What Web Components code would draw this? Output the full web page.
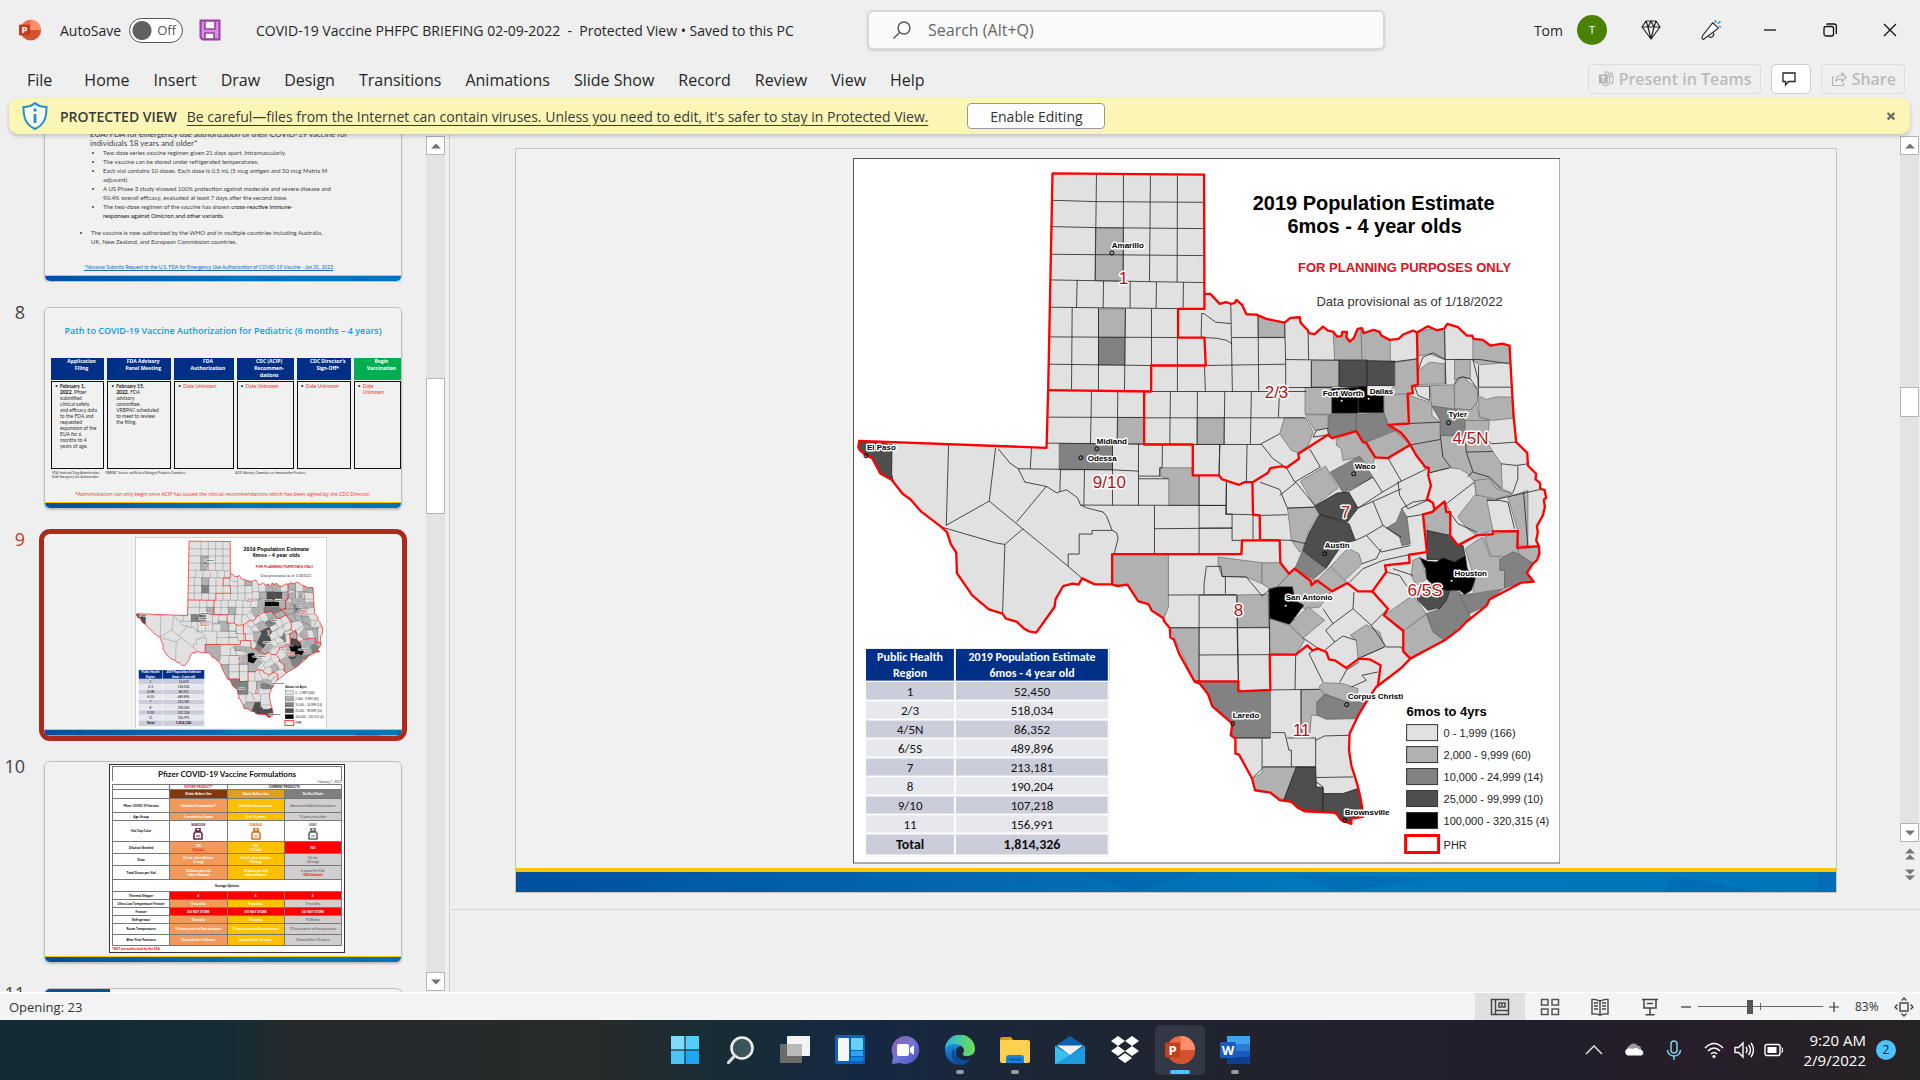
<!DOCTYPE html>
<html lang="en">
<head>
<meta charset="utf-8">
<title>COVID-19 Vaccine PHFPC BRIEFING 02-09-2022</title>
<style>
  html, body { height: 100%; }
  body { margin: 0; overflow: hidden; background: #efefef; color: #262626; font-family: "Open Sans", "Noto Sans", sans-serif; font-size: 14px; }
</style>
</head>
<body>
<ppt-window></ppt-window>

<script>
// small helper: attach an open root and fill it
function render(el, css, html) {
  el.attachShadow({ mode: 'open' });
  el.shadowRoot.innerHTML = `<style>*{box-sizing:border-box}${css}</style>${html}`;
}

/* ---------- icons ---------- */
const ICONS = {
  ppt: ['0 0 32 32', `<circle cx="17" cy="16" r="15" fill="#ed6c47"/><path d="M17 1a15 15 0 0 1 15 15H17z" fill="#ff8f6b"/><path d="M2 16h30a15 15 0 0 1-30 0z" fill="#d35230"/><rect x="0" y="8" width="16" height="16" rx="1.5" fill="#c43e1c"/><text x="8" y="21" font-family="Open Sans" font-weight="700" font-size="14" fill="#fff" text-anchor="middle">P</text>`],
  save: ['0 0 22 22', `<path d="M1.5 1.5h19v19h-17l-2-2z" fill="#d48fdc" stroke="#9b3fa6" stroke-width="2"/><path d="M6 2h10v8H6zM6 20v-6h9v6z" fill="#fff" stroke="#9b3fa6" stroke-width="1.6"/>`],
  search: ['0 0 20 20', `<circle cx="12" cy="8" r="6" fill="none" stroke="#555" stroke-width="1.4"/><path d="M7.8 12.2L1.5 18.5" stroke="#555" stroke-width="1.4"/>`],
  diamond: ['0 0 20 20', `<path d="M5 1h10l4 6-9 12L1 7zM1 7h18M7 7l3 12 3-12M5 1l2 6 3-6 3 6 2-6" fill="none" stroke="#222" stroke-width="1.2" stroke-linejoin="round"/>`],
  pen: ['0 0 22 22', `<path d="M13 3l6 6L5 19.5 2.500 21.500 1 20l1-3z" fill="#fff" stroke="#333" stroke-width="1.3" stroke-linejoin="round"/><path d="M8 18a3 3 0 1 0 5-4.500" fill="none" stroke="#333" stroke-width="1.300"/><path d="M15.500 0l.800 3M21.500 1.500l-3 2.500M22 8l-2.500-1" stroke="#2a8dd4" stroke-width="1.600"/>`],
  min: ['0 0 14 14', `<path d="M1 7h12" stroke="#111" stroke-width="1.3"/>`],
  restore: ['0 0 14 14', `<rect x="1" y="3.500" width="9.500" height="9.500" rx="2" fill="none" stroke="#111" stroke-width="1.300"/><path d="M3.500 1H11a2.300 2.300 0 0 1 2.300 2.300V11" fill="none" stroke="#111" stroke-width="1.300"/>`],
  close: ['0 0 14 14', `<path d="M1 1l12 12M13 1L1 13" stroke="#111" stroke-width="1.300"/>`],
  xbold: ['0 0 14 14', `<path d="M3 3.500l8 7.500M11 3.500L3 11" stroke="#666" stroke-width="2.600"/>`],
  teams: ['0 0 18 18', `<rect x="1" y="4" width="10" height="10" fill="#b4b4b4"/><path d="M3.500 6.500h5M6 6.500V12" stroke="#efefef" stroke-width="1.500"/><circle cx="10" cy="3" r="2" fill="none" stroke="#b4b4b4" stroke-width="1.200"/><circle cx="15" cy="3.500" r="1.500" fill="none" stroke="#b4b4b4" stroke-width="1.200"/><path d="M11 6.500h6v4.500a3 3 0 0 1-3 3M13 6.500v6a4.500 4.500 0 0 1-8 2" fill="none" stroke="#b4b4b4" stroke-width="1.200"/>`],
  comment: ['0 0 16 16', `<path d="M2 2h12v8.500H7.500L4.500 14v-3.500H2z" fill="none" stroke="#222" stroke-width="1.300"/>`],
  share: ['0 0 16 16', `<path d="M3 6H1.500v8.500h11V12M5 10c0-4 2.500-5.500 6-5.500V2l4 4.500-4 4V8C8 8 6.500 8.500 5 10z" fill="none" stroke="#b4b4b4" stroke-width="1.200" stroke-linejoin="round"/>`],
  shield: ['0 0 26 28', `<path d="M13 1c3 3 7 4 11.500 4 0 11-2 17.500-11.500 22C3.500 22.500 1.500 16 1.500 5 6 5 10 4 13 1z" fill="#fdfdf0" stroke="#2490cf" stroke-width="2"/><path d="M13 12v9" stroke="#2490cf" stroke-width="2.800"/><circle cx="13" cy="8" r="1.700" fill="#2490cf"/>`],
  up: ['0 0 10 6', `<path d="M0 5.500L5 .500l5 5z" fill="#777"/>`],
  down: ['0 0 10 6', `<path d="M0 .500h10l-5 5z" fill="#777"/>`],
  prev: ['0 0 10 12', `<path d="M0 5.500L5 .500l5 5zM0 11.500l5-5 5 5z" fill="#777"/>`],
  next: ['0 0 10 12', `<path d="M0 .500h10l-5 5zM0 6.500h10l-5 5z" fill="#777"/>`],
  normal: ['0 0 20 18', `<path d="M1.500 1.500h17v15h-17zM5.500 1.500v15M5.500 12.500h13M9 5h6v4H9zM11 7h2" fill="none" stroke="#444" stroke-width="1.500"/>`],
  sorter: ['0 0 20 18', `<path d="M1.500 1.500h6.500v5.500H1.500zM12 1.500h6.500v5.500H12zM1.500 11h6.500v5.500H1.500zM12 11h6.500v5.500H12z" fill="none" stroke="#555" stroke-width="1.500"/>`],
  reading: ['0 0 20 18', `<path d="M10 3Q6 1 2 1.500V16q4-.500 8 1 4-1.500 8-1V1.500Q14 1 10 3v14M4 5h4M4 8h4M4 11h4M12 5h4M12 8h4M12 11h4" fill="none" stroke="#444" stroke-width="1.400"/>`],
  show: ['0 0 20 18', `<path d="M2 1.500h16M4 1.500v8.500h12V1.500M7 5.500h6M10 10v6.500M5.500 16.800h9" fill="none" stroke="#444" stroke-width="1.500"/>`],
  minus: ['0 0 12 12', `<path d="M1 6h10" stroke="#333" stroke-width="1.200"/>`],
  plus: ['0 0 12 12', `<path d="M1 6h10M6 1v10" stroke="#333" stroke-width="1.200"/>`],
  fit: ['0 0 20 20', `<path d="M6 6h8v8H6zM7.500 3.500L10 1l2.500 2.500M7.500 16.500L10 19l2.500-2.500M3.500 7.500L1 10l2.500 2.500M16.500 7.500L19 10l-2.500 2.500" fill="none" stroke="#444" stroke-width="1.400"/>`],
  start: ['0 0 30 30', `<path d="M1 1h13.400v13.400H1z" fill="#7fdcff"/><path d="M15.600 1H29v13.400H15.600z" fill="#55ccfb"/><path d="M1 15.600h13.400V29H1z" fill="#4cc4f8"/><path d="M15.600 15.600H29V29H15.600z" fill="#1fa5f5"/>`],
  find: ['0 0 30 30', `<circle cx="17" cy="13" r="10.500" fill="#3e545c" stroke="#eee" stroke-width="2.600"/><path d="M9.500 21L3.500 27.500" stroke="#ddd" stroke-width="3.200" stroke-linecap="round"/>`],
  tasks: ['0 0 30 30', `<rect x="0" y="9" width="22" height="19" rx="1" fill="#6b6b6b"/><rect x="7" y="1" width="23" height="20" rx="1" fill="#f3f3f3"/><path d="M7 9h15v12H7z" fill="#b9b9b9"/>`],
  widgets: ['0 0 30 30', `<rect width="30" height="29" rx="2" fill="#0a63b8"/><rect x="3" y="3" width="11" height="23" rx="1" fill="#f5f5f5"/><rect x="16" y="3" width="12" height="12" rx="1" fill="#63d2fb"/><rect x="16" y="16" width="12" height="5" fill="#2ba3f0"/><rect x="16" y="22" width="12" height="4" fill="#0d86e8"/>`],
  chat: ['0 0 30 30', `<defs><linearGradient id="c" x2="1" y2="1"><stop stop-color="#8d5aa8"/><stop offset=".5" stop-color="#7276d8"/><stop offset="1" stop-color="#4a47b8"/></linearGradient></defs><path d="M15 1a14 14 0 1 1-5 27l-8 1 1-8A14 14 0 0 1 15 1z" fill="url(#c)"/><rect x="7" y="9" width="12" height="12" rx="2" fill="#fff"/><path d="M20 13l4-3v10l-4-3z" fill="#fff"/>`],
  edge: ['0 0 30 30', `<defs><linearGradient id="e" x2="1"><stop stop-color="#2cb4e8"/><stop offset="1" stop-color="#6be04f"/></linearGradient><linearGradient id="f" y2="1" x2="0"><stop stop-color="#1b8fdc"/><stop offset="1" stop-color="#0c4f9f"/></linearGradient></defs><path d="M0 15A15 15 0 0 1 30 14c0 5-4 7-8 7-3 0-5-1-4-3 3-4-1-8-6-8S2 12 0 15z" fill="url(#e)"/><path d="M0 15c1-4 5-6 10-6 3 0 5 1 6 2-4 0-6 4-5 8 1 5 7 8 14 5-3 4-6 6-10 6A15 15 0 0 1 0 15z" fill="url(#f)"/><path d="M9 13c-5 5-2 14 6 17 4 0 8-3 10-6-8 3-16-1-16-11z" fill="#0a4a94"/>`],
  folder: ['0 0 30 30', `<path d="M0 4q0-2 2-2h9l3 4H0z" fill="#dd9b0c"/><path d="M0 6q0-1 1-1h27q2 0 2 2v19q0 2-2 2H2q-2 0-2-2z" fill="#ffd04f"/><path d="M6 28v-5q0-3 3-3h12q3 0 3 3v5z" fill="#1683d6"/><path d="M9 24.500h12" stroke="#0b58a4" stroke-width="2"/>`],
  mail: ['0 0 30 30', `<path d="M0 11L15 1l15 10v18H0z" fill="#0f5fb0"/><path d="M0 11l30 18H0z" fill="#38c0f0"/><path d="M30 11v18H0z" fill="#1b9de0"/><path d="M2 10.500h26L15 20z" fill="#f1f1f1"/>`],
  dropbox: ['0 0 30 30', `<path d="M8 1l7 5-7 5-7-5zM22 1l7 5-7 5-7-5zM8 11l7 5-7 5-7-5zM22 11l7 5-7 5-7-5zM15 18l7 5-7 5-7-5z" fill="#fff"/>`],
  word: ['0 0 30 30', `<rect x="7" y="1" width="23" height="28" rx="2" fill="#2b7cd3"/><path d="M7 1h23v8H7z" fill="#41a5ee"/><path d="M7 16h23v7H7z" fill="#185abd"/><path d="M7 22h23v5q0 2-2 2H9q-2 0-2-2z" fill="#103f91"/><rect y="7" width="16" height="16" rx="1.500" fill="#185abd"/><text x="8" y="20" font-family="Open Sans" font-weight="700" font-size="13" fill="#fff" text-anchor="middle">W</text>`],
  chevron: ['0 0 20 20', `<path d="M2 14l8-8 8 8" fill="none" stroke="#eee" stroke-width="1.400"/>`],
  cloud: ['0 0 22 20', `<path d="M4 12a5 5 0 0 1 2-7 6 6 0 0 1 9 0 5 5 0 0 1 4 5z" fill="#9a9a9a"/><path d="M4 16a4 4 0 0 1-1-7q3-2 6 0 6-3 8 1a3 3 0 0 1 2 6z" fill="#fff"/>`],
  mic: ['0 0 20 20', `<rect x="7" y="1" width="6" height="12" rx="3" fill="none" stroke="#7fd0e6" stroke-width="1.500"/><path d="M3.500 10a6.500 6 0 0 0 13 0M10 16v4" fill="none" stroke="#7fd0e6" stroke-width="1.500"/>`],
  wifi: ['0 0 20 18', `<path d="M1 7q9-9 18 0M4 10q6-6 12 0M7 13q3-3 6 0" fill="none" stroke="#fff" stroke-width="1.600"/><circle cx="10" cy="15.500" r="1.600" fill="#fff"/>`],
  volume: ['0 0 20 18', `<path d="M1 6.500h3.500L9 2v14l-4.500-4.500H1z" fill="none" stroke="#fff" stroke-width="1.400"/><path d="M12 6q2 3 0 6M14.500 4q4 5 0 10M17 2q5 7 0 14" fill="none" stroke="#fff" stroke-width="1.400"/>`],
  battery: ['0 0 20 18', `<rect x="1" y="3.500" width="15" height="11" rx="2" fill="none" stroke="#fff" stroke-width="1.400"/><path d="M3.500 6h9v6h-9z" fill="#fff"/><path d="M17 7h1.500v4H17" stroke="#fff" fill="none"/>`],
};

class OfficeIcon extends HTMLElement {
  connectedCallback() {
    const [box, body] = ICONS[this.getAttribute('name')];
    render(this, `:host{display:inline-flex;flex:none;width:20px;height:20px} svg{width:100%;height:100%;display:block}`,
      `<svg viewBox="${box}" aria-hidden="true">${body}</svg>`);
  }
}
customElements.define('office-icon', OfficeIcon);

/* ---------- Texas map ---------- */
// The map is digitised on four sheets, three units to the pixel.
const SHEETS = { nw: [0, 0], ne: [1050, 0], sw: [0, 840], se: [1050, 840] };

function place(sheet, pts) {
  const [dx, dy] = SHEETS[sheet];
  return pts.trim().split(/\s+/).map(p => {
    const [x, y] = p.split(',').map(Number);
    return (x + dx) + ',' + (y + dy);
  }).join(' ');
}
function join(rows) {
  return rows.trim().split('\n').map(r => {
    r = r.trim();
    return place(r.slice(0, 2), r.slice(3));
  }).join(' ');
}

const OUTLINE = join(`
nw 608,73 1063,77 1064,435
ne 32,435 60,465 78,460 95,465 105,462 110,453 127,468 140,496 170,497 200,510 255,521 272,507 300,505 303,522 325,545 328,553 345,556 370,533 385,545 400,548 412,563 425,562 428,549 442,549 440,565 450,578 462,568 474,540 487,538 492,553 522,543 540,549 545,560 570,573 597,570 612,556 640,545 652,551 685,532 712,544 733,540 743,525 775,535 802,560 818,560 822,570 850,573 872,590 908,584 930,590 936,700 942,800 950,880 983,912 985,945
se 985,110 1010,135 1008,152 1022,163 1022,180 1035,183 1040,208 1033,212 1036,235 1030,260 1012,292 1015,310 1010,335 1018,352 1020,375 1012,395 1000,405 982,433 1003,459 965,462 870,512 862,530 800,580 778,603 735,635 632,690 605,718 530,775 500,820 475,862 450,915 448,965 455,1010 475,1075 483,1110 488,1138 490,1165 455,1170 455,1186 425,1175 410,1155 400,1152 315,1148 295,1138 275,1120 240,1115 212,1092 166,1085 157,1050 118,978 107,975 107,930 93,920 98,885 38,833 25,797 0,765
sw 1035,760 988,675 972,632 962,627 960,598 943,578 940,568 905,545 897,527 865,517 833,468 803,472 787,467 735,467 697,449 686,468 668,465 640,472 617,512 614,535 559,612 537,608 523,600 500,579 468,570 458,555 417,542 367,500 321,433 319,372 303,347 291,310 275,295 212,247 182,212 158,195 125,153 91,134 66,87 48,80 30,65 25,55 28,36 590,57
nw 595,720`);

// Public Health Region borders
const BORDERS = [
  join(`nw 1064,435 1064,480 985,480 985,566 1064,566 1068,650 904,650 904,728 595,724`),
  join(`nw 883,728 883,887 1029,887 1029,980 1108,980 1118,992 1168,1008
ne 135,1000 160,1000 205,972 212,958 248,952 260,957 298,930 296,915 385,858 397,868 470,847 490,880 500,882 527,926 565,928 632,888 620,870 602,850 566,828 628,824 624,735 640,733 637,712 655,707 652,551`),
  join(`ne 632,888 650,920 672,948 676,955 688,957 686,980 694,1010 682,1052
se 700,222 705,243 735,218 740,250 752,250 752,320 775,350 832,320 880,316 880,308 955,307 953,357 1018,352`),
  join(`se 705,243 698,250 670,257 682,370 628,378 630,402 556,410 560,430 518,488 565,540 553,560 611,607 611,668 632,690`),
  join(`se 158,160 160,258 180,260 181,332`),
  join(`sw 787,467 787,376 1175,376 1177,335
se 240,335 242,402 268,435 285,420 333,457 335,470 352,455 397,488 443,463 475,488 518,488`),
  join(`se -15,758 116,758 116,788 212,784 210,678 288,678 323,650 338,665 355,660 380,670 388,692 405,695 440,718 478,690 510,692 543,710 535,770`),
];

// shaded counties: sheet, class, corners
const SHADED = `
nw b 737,237 821,238 820,397 736,395
nw b 746,480 827,480 825,566 746,566
nw c 746,566 825,566 825,648 746,648
nw b 804,806 883,806 883,887 802,885
nw c 628,885 788,885 788,963 628,963
nw b 1042,807 1123,807 1123,887 1042,887
nw b 930,957 1027,957 1029,980 1048,982 1048,1070 957,1070 957,990 930,982
sw d 28,36 126,47 125,136 130,158 91,134 66,87 30,65
sw b 787,376 956,378 956,535 943,568 905,545 865,517 833,468 787,467
sw b 960,598 1048,598 1048,757 1035,757
ne b 175,500 255,521 255,565 175,565
ne b 400,545 484,530 487,633 405,633
ne b 484,530 545,545 572,573 572,640 487,633
ne b 335,636 418,634 418,713 335,713
ne d 418,634 502,634 502,713 418,713
ne d 502,636 586,637 586,710 502,710
ne b 586,642 652,630 655,707 637,712 640,733 586,740 553,740 586,710
ne b 316,716 397,716 397,796 316,796
ne e 397,720 475,715 475,793 397,793
ne e 476,713 502,713 502,740 553,740 553,791 476,791
ne b 553,738 624,735 628,824 566,828 553,793
ne b 318,798 385,798 385,840 345,845
ne c 387,798 470,796 468,847 397,868 387,855
ne c 470,796 553,793 566,828 602,842 500,880 490,880 468,847
ne b 500,880 602,840 632,888 565,928 527,926
ne b 254,807 318,807 340,850 326,890 296,912 275,905 240,855
ne a 340,865 350,845 383,838 387,858
ne b 410,870 468,850 525,925 518,960 480,925 430,935 425,900 410,890
ne b 302,997 378,952 415,1018 345,1070
ne c 392,970 480,922 520,985 430,1032
ne b 628,740 697,762 697,800 722,820 722,860 795,862 797,815 870,815 862,880 880,908 905,945 908,1020 940,1034 890,1050 860,1055 830,1040 825,1000 805,975 780,960 750,957 690,972 688,957 672,948 632,888 566,828 628,824
ne b 652,551 735,530 735,632 690,615 655,622
ne b 820,560 930,585 932,640 840,648 820,635
ne b 655,665 690,640 737,645 740,705 655,707
ne b 765,632 812,632 812,690 790,684 765,695
ne b 690,710 763,708 765,780 697,772
ne b 765,705 790,684 833,720 835,760 815,783 765,780
ne b 765,780 815,783 830,762 840,805 870,815 795,815
ne b 835,740 860,752 890,744 938,745 940,808 880,815 840,805
ne a 645,712 690,712 690,755 655,740
ne c 697,772 780,785 795,815 795,860 722,860 722,815
se d 345,232 412,193 447,190 475,238 443,280 360,257
se d 360,257 448,285 467,335 445,340 415,365 378,420 308,365 330,310
se b 263,238 345,235 358,257 330,300 308,365 300,370 275,335 270,290
se c 308,368 378,420 335,457 285,420
se b 445,358 478,375 487,405 430,460 393,413
se b 352,455 393,413 443,463 397,488
se c 607,240 622,265 632,345 607,350 600,325 560,298 590,280
se b 55,385 187,402 187,465 140,445 67,443 55,410
se b 187,402 242,402 268,435 232,475 210,480 187,465
se b 232,475 285,420 352,458 395,488 360,535 315,540 285,520 278,475
se e 208,482 235,475 278,475 285,515 312,530 270,587 210,570
se b 110,499 205,497 208,595 112,597
se b 210,570 270,590 315,635 288,678 210,675
se b 270,587 325,535 375,575 310,628
se b 452,620 500,588 540,610 555,655 475,690 470,635
se b 670,257 705,243 738,220 752,250 752,318 720,318 682,305
se b 785,250 825,200 870,200 862,215 880,305 832,320 803,300 775,265
se b 925,205 985,185 985,352 957,350 955,307
se b 825,155 870,150 890,180 940,195 890,212 830,198
se b 553,560 640,500 680,555 615,605
se b 640,395 662,385 682,450 650,470 635,440
se b 611,607 680,557 700,600 735,635 632,690 611,668
se c 680,555 720,540 750,487 780,490 808,550 812,565 735,635 700,610
se c 780,498 820,495 915,478 870,512 862,530 808,555
se b 797,360 825,340 850,325 872,383 900,383 900,425 915,425 915,480 820,495 825,450
se b 855,325 880,315 955,307 953,357 960,378 940,370 925,383 875,383
se b 955,360 1020,355 1012,395 1000,405 958,375
se c 902,390 940,370 960,378 1000,405 982,433 1003,459 965,462 915,478 915,425 902,425
se d 682,305 750,320 775,350 790,350 797,385 760,400 710,392 682,392
se d 650,500 700,465 750,487 740,515 720,540 712,538 685,545 655,515
se e 662,388 685,398 710,400 730,388 765,400 797,382 803,420 827,450 815,485 795,497 780,485 740,485 700,472 682,450 678,420
se c 0,762 113,762 116,788 212,784 212,928 107,928 93,920 98,885 38,833 25,797
se b 304,784 360,782 375,800 352,820 352,860 335,860 330,925 304,925
se b 370,762 430,765 475,780 470,805 440,820 375,795 358,775
se c 352,820 375,797 440,820 500,820 470,870 380,872 352,860
se b 190,1015 290,1015 252,1115 212,1092 166,1085 157,1050 185,1035
se d 290,1015 348,1015 350,1075 370,1077 370,1148 315,1150 275,1125 252,1115
se d 370,1095 430,1095 475,1080 490,1138 490,1165 455,1186 400,1155 370,1148`;

// county lines that no shaded county already draws
const LINES = `
nw 740,77 736,395
nw 821,77 820,397
nw 902,77 899,397
nw 983,77 982,400
nw 608,154 740,158 1063,160
nw 605,233 740,236 1063,239
nw 603,316 1063,320
nw 601,393 1063,401
nw 600,475 1063,480
nw 598,564 985,566
nw 596,646 904,650
nw 682,395 680,476
nw 761,396 760,477
nw 841,397 841,478
nw 920,399 919,478
nw 1001,400 1000,478
nw 667,477 665,722
nw 746,478 746,724
nw 827,480 824,726
nw 905,480 905,650
nw 983,566 983,728
nw 1064,650 1067,728
nw 1143,460 1145,566 1148,728
nw 904,728 1370,728
nw 1063,650 1308,646
nw 1064,566 1100,568 1130,574 1147,585
nw 1054,566 1056,493 1064,495 1098,520 1143,524
nw 725,728 722,885
nw 804,728 802,885
nw 595,805 883,806
nw 590,883 1029,887
nw 962,728 960,887
nw 1043,728 1042,887
nw 1125,728 1123,887
nw 883,807 1366,807
nw 1029,887 1234,887
nw 545,898 541,960
nw 788,885 788,1070
nw 866,885 866,1070
nw 704,963 702,1070
nw 632,963 630,1028
nw 505,960 788,963 866,967
nw 938,887 937,957 930,957 930,982 866,982
nw 866,990 957,990
nw 1048,980 1048,1216
nw 692,1069 1128,1070
nw 1110,887 1108,980
nw 1130,998 1128,1096 1147,1096 1147,1175 1175,1175
nw 914,1070 914,1216
sw 914,300 1147,298
sw 1127,256 1210,258 1210,330
nw 445,900 480,943 505,960 525,1000 590,1013 620,1032 650,1023 683,1047 692,1069 710,1077 760,1090 770,1102 787,1145 800,1152 805,1168 793,1216
sw 437,57 418,217 655,413 697,449
sw 418,217 288,290
sw 296,46 289,290
sw 275,295 440,343 465,347 520,300
sw 465,347 458,555
sw 590,172 500,280
sw 787,305 727,305 727,316 688,316 688,376 655,376 655,413
sw 956,499 1160,498
sw 1048,499 1048,760
sw 960,597 1260,597
sw 1048,679 1260,678
sw 1162,499 1166,760
sw 1063,497 1063,465 1070,413 1113,413 1117,443 1127,445 1127,495
ne 175,500 177,728
ne 255,521 258,646 258,716
ne 325,545 327,632
ne 97,566 255,566
ne 258,632 418,634
ne 572,640 652,630
ne 155,728 152,885
ne 240,716 236,805
ne 335,636 335,716
ne 258,716 397,716
ne 60,887 58,980
ne 142,887 140,998
ne 184,885 240,855
ne 184,885 220,930 250,950
ne 330,900 362,955 285,1000 262,960
ne 180,1000 240,1022 263,1078
ne 240,1040 290,1000
ne 290,1002 345,1070
ne 520,985 548,1030 475,1078
ne 447,1028 520,985
ne 565,928 605,997 548,1030
ne 605,997 688,957
ne 595,997 600,1040 625,1080 690,1052
ne 735,545 737,632 737,705
ne 655,665 670,625 700,612 737,632
ne 737,632 840,632 930,645
ne 837,650 837,715 936,715
ne 820,632 835,690 837,740
ne 765,705 775,688 790,684 812,690 833,720
ne 608,825 722,820
ne 635,888 722,872
ne 722,860 730,925 755,957
ne 797,860 800,910 820,968 805,985
ne 800,910 880,908
ne 820,970 870,985 905,1020
ne 862,870 875,885 950,880
ne 905,945 950,950 985,945
ne 955,952 955,990 940,1032
ne 890,1052 1022,1022
ne 972,1030 985,1192
ne 690,972 750,957
ne 825,1000 740,1065
se 263,238 345,235
se 520,218 550,290 500,320 467,335
se 475,238 520,218 605,180
se 500,320 545,370 632,350
se 550,290 605,325
se 622,265 682,255
se 487,405 530,390 545,360
se 450,460 490,420 550,395 628,378
se 605,240 640,220 690,212
se 80,162 80,256
se 0,230 78,230
se 0,298 97,298
se 181,332 275,335
se 180,260 263,258
se 275,335 320,345
se 67,443 140,445 187,502 208,485
se 0,499 110,499
se 112,597 116,760
se 208,480 210,678
se 463,490 460,540 515,590 565,540
se 460,540 400,585 370,540
se 400,585 378,605 405,640 430,622 470,635
se 405,640 375,665
se 310,628 360,662
se 515,590 560,655 605,655 611,668
se 475,690 555,655
se 560,430 600,440 620,470 650,500
se 580,420 640,440
se 862,215 900,215 925,220 945,300
se 750,250 775,285 832,310
se 288,678 286,784
se 212,784 360,782
se 304,784 304,925
se 215,912 255,912 268,965 275,965 275,1015
se 187,930 187,1020 157,1050
se 107,928 212,928
se 262,928 348,928 348,1015
se 190,1015 348,1015
se 348,935 375,922 450,920
se 350,1047 460,1045
se 350,1060 370,1075 370,1095
se 328,675 370,760
se 328,675 350,660
se 420,762 440,725 478,700
se 535,730 487,740 500,755 455,775`;

const REGIONS = [[269, 135, '1'], [243, 339, '9/10'], [415, 249, '2/3'], [603, 295, '4/5N'], [491, 369, '7'], [384, 467, '8'], [558, 447, '6/5S'], [443, 587, '11']];
// label x, label y, name, dot x, dot y, white dot
const CITIES = [
  [262, 99, 'Amarillo', 262, 104], [247, 295, 'Midland', 247, 300], [238, 312, 'Odessa', 231, 309], [17, 301, 'El Paso', 16, 307],
  [599, 268, 'Tyler', 599, 274], [505, 320, 'Waco', 504, 325], [473, 247, 'Fort Worth', 492, 252, 1], [520, 245, 'Dallas', 519, 250, 1],
  [475, 399, 'Austin', 475, 405], [436, 451, 'San Antonio', 436, 457, 1], [605, 427, 'Houston', 602, 432, 1], [383, 569, 'Laredo', 383, 575],
  [498, 550, 'Corpus Christi', 497, 556], [495, 666, 'Brownsville', 495, 672],
];
const LEGEND = [['#e1e1e1', '0 - 1,999 (166)'], ['#b1b1b1', '2,000 - 9,999 (60)'], ['#828282', '10,000 - 24,999 (14)'], ['#4e4e4e', '25,000 - 99,999 (10)'], ['#000', '100,000 - 320,315 (4)']];
const POPULATION = [['1', '52,450'], ['2/3', '518,034'], ['4/5N', '86,352'], ['6/5S', '489,896'], ['7', '213,181'], ['8', '190,204'], ['9/10', '107,218'], ['11', '156,991']];

class TexasMap extends HTMLElement {
  connectedCallback() {
    const shaded = SHADED.trim().split('\n').map(r => `<polygon class="${r[3]}" points="${place(r.slice(0, 2), r.slice(5))}"/>`).join('');
    const lines = LINES.trim().split('\n').map(r => `<polyline points="${place(r.slice(0, 2), r.slice(3))}"/>`).join('');
    const borders = BORDERS.map(p => `<polyline points="${p}"/>`).join('');
    render(this, `
      :host { display: block; }
      svg { display: block; width: 100%; height: auto; background: #fff; font-family: "Liberation Sans", Arial, sans-serif; }
      .county { fill: none; stroke: #222; stroke-width: 2.4; }
      .a { fill: #e1e1e1; } .b { fill: #b1b1b1; stroke: #777; } .c { fill: #828282; stroke: #666; } .d { fill: #4e4e4e; stroke: #222; } .e { fill: #000; }
      .phr { fill: none; stroke: #f00; stroke-width: 7; stroke-linejoin: round; }
      .halo text { paint-order: stroke; stroke: #fff; stroke-width: 3px; stroke-linejoin: round; }
      .num { font-size: 17px; fill: #b01217; }
      .city { font-size: 8px; font-weight: 700; }
      table { width: 100%; border-collapse: separate; border-spacing: 0; font: 14px/17px Carlito, Lato, sans-serif; text-align: center; color: #111; table-layout: fixed; }
      td, th { padding: 0; border-bottom: 2px solid #fff; border-right: 2px solid #fff; }
      td { font-size: 13px; }
      th { background: #002f87; color: #fff; font-size: 12px; line-height: 16px; }
      tr:nth-child(odd) td { background: #cbcddb; } tr:nth-child(even) td { background: #e7e8ee; }
      tfoot td { font-weight: 700; font-size: 14px; line-height: 20px; }
    `, `
      <svg viewBox="3 9 708 706" role="img" aria-label="Texas counties by population aged 6 months to 4 years">
        <defs><clipPath id="tx"><polygon points="${OUTLINE}"/></clipPath></defs>
        <g transform="scale(.33333)">
          <polygon class="a" points="${OUTLINE}"/>
          <g class="county" clip-path="url(#tx)">${shaded}${lines}</g>
          <g class="phr">${borders}<polygon points="${OUTLINE}"/></g>
        </g>
        <g class="halo">
          <g class="num">${REGIONS.map(([x, y, t]) => `<text x="${x}" y="${y}">${t}</text>`).join('')}</g>
          ${CITIES.map(c => `<circle cx="${c[3]}" cy="${c[4]}" r="${c[5] ? 1 : 2}" fill="${c[5] ? '#fff' : 'none'}" stroke="${c[5] ? 'none' : '#000'}"/>`).join('')}
          <g class="city">${CITIES.map(([x, y, t]) => `<text x="${x}" y="${y}">${t}</text>`).join('')}</g>
        </g>
        <g text-anchor="middle">
          <text x="524" y="61" font-size="20" font-weight="700">2019 Population Estimate</text>
          <text x="525" y="84" font-size="20" font-weight="700">6mos - 4 year olds</text>
          <text x="555" y="123" font-size="13" font-weight="700" fill="#e0101b">FOR PLANNING PURPOSES ONLY</text>
          <text x="560" y="157" font-size="13" fill="#333">Data provisional as of 1/18/2022</text>
        </g>
        <text x="557" y="567" font-size="13" font-weight="700">6mos to 4yrs</text>
        ${LEGEND.map(([c, t], i) => `<rect x="557" y="${576 + i * 22}" width="31" height="16" fill="${c}" stroke="#333"/><text x="594" y="${588 + i * 22}" font-size="11" fill="#222">${t}</text>`).join('')}
        <rect x="556" y="687" width="33" height="17" fill="#fff" stroke="#f00" stroke-width="3"/>
        <text x="594" y="700" font-size="11" fill="#222">PHR</text>
        <foreignObject x="16" y="500" width="244" height="212">
          <table>
            <colgroup><col style="width:37%"><col></colgroup>
            <thead><tr><th>Public Health<br>Region</th><th>2019 Population Estimate<br>6mos - 4 year old</th></tr></thead>
            <tbody>${POPULATION.map(([r, n]) => `<tr><td>${r}</td><td>${n}</td></tr>`).join('')}</tbody>
            <tfoot><tr><td>Total</td><td>1,814,326</td></tr></tfoot>
          </table>
        </foreignObject>
        <rect x="3.500" y="9.500" width="707" height="705" fill="none" stroke="#555"/>
      </svg>`);
  }
}
customElements.define('texas-map', TexasMap);

// gold and blue band at the foot of every slide
class SlideBand extends HTMLElement {
  connectedCallback() {
    render(this, `
      :host { display: block; }
      svg { display: block; width: 100%; height: auto; }
    `, `<svg viewBox="0 0 1320 24" aria-hidden="true">
      <defs><linearGradient id="g"><stop stop-color="#00509e"/><stop offset=".35" stop-color="#0468b0"/><stop offset=".6" stop-color="#0078bb"/><stop offset="1" stop-color="#0075ba"/></linearGradient></defs>
      <path d="M0 0h1320v4H0z" fill="#fdc300"/><path d="M0 4h1320v20H0z" fill="url(#g)"/>
      <path d="M120 24l40-20 180 20zM560 4h120l-60 20zM820 24l-40-18 140 4z" fill="#005ea8" opacity=".35"/>
      <path d="M1148 24l8-17 84 17zM1302 4h18v20h-18z" fill="#006bb3" opacity=".8"/></svg>`);
  }
}
customElements.define('slide-band', SlideBand);

// proportional, so the same slide serves as page and thumbnail
class MapSlide extends HTMLElement {
  connectedCallback() {
    render(this, `
      :host { display: flex; flex-direction: column; background: #f1f1f1; aspect-ratio: 1320 / 744; overflow: hidden; }
      texas-map { width: 53.6%; margin: .7% 0 0 25.5%; }
      slide-band { margin-top: auto; }
    `, `<texas-map></texas-map><slide-band></slide-band>`);
  }
}
customElements.define('map-slide', MapSlide);

/* ---------- thumbnails ---------- */
class NovavaxSlide extends HTMLElement {
  connectedCallback() {
    render(this, `
      :host { display: flex; flex-direction: column; height: 200px; justify-content: flex-end; background: #f1f1f1; font: 6px/9px Lato, sans-serif; color: #444; white-space: nowrap; }
      .lead { font-size: 8px; margin: 0 0 0 45px; }
      ul { margin: 0; padding: 0 0 0 58px; }
      ul.outer { margin-top: 8px; padding-left: 46px; }
      b { font-weight: 400; color: #111; }
      a { display: block; margin: 18px 0 5px 39px; font-size: 5px; line-height: 6px; color: #1c62b7; }
    `, `
      <p class="lead">EUA/FDA for emergency use authorization of their COVID-19 vaccine for<br>individuals 18 years and older*</p>
      <ul><li>Two dose series vaccine regimen given 21 days apart. Intramuscularly.</li>
      <li>The vaccine can be stored under refrigerated temperatures.</li>
      <li>Each vial contains 10 doses. Each dose is 0.5 mL (5 mcg antigen and 50 mcg Matrix M<br>adjuvant).</li>
      <li>A US Phase 3 study showed 100% protection against moderate and severe disease and<br>90.4% overall efficacy, evaluated at least 7 days after the second dose.</li>
      <li>The two-dose regimen of the vaccine has shown <b>cross-reactive immune-<br>responses against Omicron and other variants.</b></li></ul>
      <ul class="outer"><li>The vaccine is now authorized by the WHO and in multiple countries including Australia,<br>UK, New Zealand, and European Commission countries.</li></ul>
      <a href="#">*Novavax Submits Request to the U.S. FDA for Emergency Use Authorization of COVID-19 Vaccine - Jan 31, 2022</a>
      <slide-band></slide-band>`);
  }
}
customElements.define('novavax-slide', NovavaxSlide);

class PathSlide extends HTMLElement {
  connectedCallback() {
    const steps = [
      ['Application<br>Filing', '<b>February 1,<br>2022</b>, Pfizer<br>submitted<br>clinical safety<br>and efficacy data<br>to the FDA and<br>requested<br>expansion of the<br>EUA for 6<br>months to 4<br>years of age.'],
      ['FDA Advisory<br>Panel Meeting', '<b>February 15,<br>2022</b>, FDA<br>advisory<br>committee,<br>VRBPAC scheduled<br>to meet to review<br>the filing.'],
      ['FDA<br>Authorization', '<i>Date Unknown</i>'],
      ['CDC (ACIP)<br>Recommen-<br>dations', '<i>Date Unknown</i>'],
      ['CDC Director’s<br>Sign-Off*', '<i>Date Unknown</i>'],
      ['Begin<br>Vaccination', '<i>Date<br>Unknown</i>'],
    ];
    render(this, `
      :host { display: flex; flex-direction: column; height: 200px; background: #f1f1f1; font-family: Lato, sans-serif; color: #333; }
      h3 { margin: 16px 0 20px; font: 600 9px/14px "Open Sans", sans-serif; text-align: center; color: #00a3e6; }
      .steps { display: grid; grid-template-columns: 53fr 64fr 59fr 57fr 54fr 47fr; column-gap: 3px; padding-left: 6px; }
      .step { min-width: 0; }
      .head { height: 22px; background: #002f87; color: #fff; font: 700 5px/7px "Open Sans", sans-serif; padding-left: 8px; text-align: center; white-space: nowrap; }
      .step:last-child .head { background: #00ad50; }
      .box { margin-top: 1px; height: 88px; border: 1px solid #111; font-size: 5px; line-height: 6px; padding: 1px 0 0 8px; white-space: nowrap; }
      .box::before { content: "•"; float: left; margin-left: -5px; }
      i { font-style: normal; color: #fa2a2a; }
      b { color: #111; }
      small { display: flex; gap: 6px; padding-left: 7px; font-size: 3px; line-height: 4px; height: 14px; margin-top: 2px; }
      small span:nth-child(2) { flex: 0 0 124px; }
      p { margin: 5px 0 0; text-align: center; color: #fa2a2a; font: 5px/8px "Open Sans", sans-serif; }
      slide-band { margin-top: auto; }
    `, `
      <h3>Path to COVID-19 Vaccine Authorization for Pediatric (6 months – 4 years)</h3>
      <div class="steps">${steps.map(([h, b]) => `<div class="step"><div class="head">${h}</div><div class="box">${b}</div></div>`).join('')}</div>
      <small><span>FDA: Food and Drug Administration<br>EUA: Emergency Use Authorization</span><span>VRBPAC: Vaccine and Related Biological Products Committee</span><span>ACIP: Advisory Committee on Immunization Practices</span></small>
      <p>*Administration can only begin once ACIP has issued the clinical recommendations which has been signed by the CDC Director.</p>
      <slide-band></slide-band>`);
  }
}
customElements.define('path-slide', PathSlide);

class PfizerSlide extends HTMLElement {
  connectedCallback() {
    const vial = (cap, name) => `<span style="color:${cap}">${name}</span><svg viewBox="0 0 10 12" width="10" height="12"><path d="M3 0h4v3H3zM2 4h6l1 2v5H1V6z" fill="#fff" stroke="${cap}" stroke-width="1.600"/><path d="M3 8h4" stroke="${cap}"/></svg>`;
    const rows = [
      [9, '', 'Dilute Before Use', 'Dilute Before Use', 'Do Not Dilute', 'top'],
      [14, 'Pfizer COVID-19 Vaccine', 'Pediatric Formulation*', 'Pediatric Formulation', 'Adolescent/Adult Formulation'],
      [8, 'Age Group', '6 months to 4 years', '5 to 11 years', '12 years and older'],
      [21, 'Vial Cap Color', vial('#6b2346', 'MAROON'), vial('#d8731a', 'ORANGE'), vial('#62666e', 'GRAY'), 'plain'],
      [12, 'Dilution Needed', 'YES<br><em>(2.2 mL)</em>', 'YES<br>(1.3 mL)', 'NO', 'no'],
      [12, 'Dose', '0.2 mL after dilution<br>(3 mcg)', '0.2 mL after dilution<br>(10 mcg)', '0.3 mL<br>(30 mcg)'],
      [14, 'Total Doses per Vial', '10 doses per vial<br>(after dilution)', '10 doses per vial<br>(after dilution)', '6 doses Per Vial<br><em>(NO dilution)</em>'],
      [12, null],
      [8, 'Thermal Shipper', 'X', 'X', 'X', 'stop'],
      [8, 'Ultra-Low Temperature Freezer', '9 months', '9 months', '9 months'],
      [8, 'Freezer', 'DO NOT STORE', 'DO NOT STORE', 'DO NOT STORE', 'stop'],
      [8, 'Refrigerator', '10 weeks', '10 weeks', '10 Weeks'],
      [11, 'Room Temperature', '12 hours prior to first puncture', '12 hours prior to first puncture', '12 hours prior to first puncture'],
      [11, 'After First Puncture', 'Discard after 12 hours', 'Discard after 12 hours', 'Discard after 12 hours'],
    ];
    render(this, `
      :host { display: flex; flex-direction: column; align-items: center; height: 200px; background: #f1f1f1; font: 3px/4px "Open Sans", sans-serif; color: #111; }
      .page { width: 236px; height: 189px; margin: 2px 0 0 8px; border: 1px solid #333; background: #fff; padding: 1px 2px; }
      h3 { margin: 0; font: 700 8px/14px Lato, sans-serif; text-align: center; border: 1px solid #777; border-width: 1px 1px 0; }
      time { display: block; text-align: right; line-height: 3px; padding-right: 1px; }
      table { width: 100%; border-collapse: collapse; table-layout: fixed; text-align: center; font-weight: 700; }
      td { padding: 0; border: 1px solid #777; }
      td:nth-child(2) { background: #f39a5b; color: #fff; } td:nth-child(3) { background: #ffc000; color: #fff; } td:nth-child(4) { background: #d0cece; color: #777; }
      .first td { background: #fff; color: #111; border-bottom: 0; } .first td:nth-child(2), em { color: #f00; font-style: normal; }
      .top td:nth-child(2) { background: #84380a; } .top td:nth-child(3) { background: #e09c23; } .top td:nth-child(4) { background: #7f7f7f; color: #fff; }
      .plain td { background: #fff; } .plain svg { display: block; margin: 1px auto 0; }
      .stop td + td, .no td:nth-child(4) { background: #f00; color: #fff; }
      p { margin: 1px 0; color: #f00; font-weight: 700; }
      slide-band { margin-top: auto; width: 100%; }
    `, `
      <div class="page"><h3>Pfizer COVID-19 Vaccine Formulations</h3><time>February 7, 2022</time>
      <table><tr class="first" style="height:4px"><td></td><td>FUTURE PRODUCT*</td><td colspan="2">CURRENT PRODUCTS</td></tr>
      ${rows.map(([h, ...c]) => c[0] === null ? `<tr style="height:${h}px"><td colspan="4">Storage Options</td></tr>` : `<tr class="${c[4] || ''}" style="height:${h}px">${c.slice(0, 4).map(t => `<td>${t}</td>`).join('')}</tr>`).join('')}
      </table><p>*NOT yet authorized by the FDA</p></div>
      <slide-band></slide-band>`);
  }
}
customElements.define('pfizer-slide', PfizerSlide);

class SlideThumb extends HTMLElement {
  connectedCallback() {
    render(this, `
      :host { display: flex; flex: none; align-items: flex-start; height: 202px; }
      .no { width: 25px; margin-right: 19px; text-align: right; font: 18px/24px "Open Sans", sans-serif; color: #444; margin-top: -7px; }
      .card { width: 358px; height: 202px; border: 1px solid #c0c0c0; border-radius: 6px; overflow: hidden; background: #f1f1f1; box-shadow: 0 1px 2px #0003; }
      :host([first]) { height: 148px; align-items: flex-end; overflow: hidden; }
      :host([current]) .no { color: #c43e1c; }
      :host([current]) .card { border: 0; outline: 5px solid #ab2a1b; }
    `, `<div class="no">${this.getAttribute('no') || ''}</div><div class="card"><slot></slot></div>`);
  }
}
customElements.define('slide-thumb', SlideThumb);

/* ---------- window parts ---------- */
class ScrollRail extends HTMLElement {
  connectedCallback() {
    const [a, b, c] = this.getAttribute('parts').split(' ');
    render(this, `
      :host { display: flex; flex-direction: column; width: 19px; flex: none; background: #e3e3e3; }
      button { height: 19px; flex: none; border: 1px solid #b5b5b5; background: #fff; padding: 0; display: grid; place-items: center; }
      office-icon { width: 10px; height: 6px; }
      .thumb { background: #fff; border: 1px solid #b5b5b5; flex: ${b} 1 0; }
    `, `<button aria-label="Scroll up"><office-icon name="up"></office-icon></button>
      <span style="flex:${a} 1 0"></span><span class="thumb"></span><span style="flex:${c} 1 0"></span>
      <button aria-label="Scroll down"><office-icon name="down"></office-icon></button>`);
  }
}
customElements.define('scroll-rail', ScrollRail);

class TitleBar extends HTMLElement {
  connectedCallback() {
    render(this, `
      :host { display: grid; grid-template-columns: 867fr 518fr 535fr; align-items: center; height: 60px; font-size: 14px; }
      .left, .right, label { display: flex; align-items: center; }
      .left { padding-left: 19px; white-space: nowrap; }
      .left > office-icon { width: 22px; height: 22px; }
      .auto { gap: 8px; margin: 0 15px 0 19px; }
      .auto input { appearance: none; margin: 0; width: 54px; height: 25px; border: 1px solid #555; border-radius: 13px; background: radial-gradient(circle at 12px 50%, #606060 9px, #fff 10px); }
      .off { margin: 0 0 0 -34px; padding-right: 8px; color: #555; font-size: 13px; }
      h1 { margin: 0 0 0 35px; font-size: 14px; font-weight: 400; white-space: pre; }
      .search { height: 40px; border: 2px solid #d8d8d8; border-radius: 6px; background: #fafafa; padding-left: 23px; gap: 14px; box-shadow: 0 1px 2px #0002; }
      .search input { border: 0; background: none; flex: 1; font: 16px "Open Sans", sans-serif; outline: 0; }
      .search input::placeholder { color: #666; }
      .right { justify-content: flex-end; padding-right: 23px; gap: 46px; }
      .right button { border: 0; padding: 0; background: none; display: flex; }
      .who { display: flex; align-items: center; gap: 14px; margin-right: -12px; }
      .avatar { width: 30px; height: 30px; border-radius: 50%; background: #498205; color: #fff; font-size: 11px; line-height: 30px; text-align: center; }
      .wide { width: 20px; height: 20px; } .ctl { width: 14px; height: 14px; }
      .a { margin-right: -6px; } .b { margin-right: -4px; }
    `, `
      <div class="left"><office-icon name="ppt"></office-icon>
        <label class="auto">AutoSave <input type="checkbox" role="switch"><span class="off">Off</span></label>
        <office-icon name="save"></office-icon>
        <h1>COVID-19 Vaccine PHFPC BRIEFING 02-09-2022  -  Protected View • Saved to this PC</h1></div>
      <label class="search"><office-icon name="search"></office-icon><input type="search" aria-label="Search" placeholder="Search (Alt+Q)"></label>
      <div class="right"><span class="who">Tom <span class="avatar">T</span></span>
        <button class="a" aria-label="Premium"><office-icon class="wide" name="diamond"></office-icon></button>
        <button class="b" aria-label="What's new"><office-icon class="wide" name="pen"></office-icon></button>
        <button aria-label="Minimize"><office-icon class="ctl" name="min"></office-icon></button>
        <button aria-label="Restore"><office-icon class="ctl" name="restore"></office-icon></button>
        <button aria-label="Close"><office-icon class="ctl" name="close"></office-icon></button></div>`);
  }
}
customElements.define('title-bar', TitleBar);

class RibbonTabs extends HTMLElement {
  connectedCallback() {
    const tabs = ['File', 'Home', 'Insert', 'Draw', 'Design', 'Transitions', 'Animations', 'Slide Show', 'Record', 'Review', 'View', 'Help'];
    render(this, `
      :host { display: flex; align-items: center; height: 38px; padding: 0 15px 0 27px; gap: 10px; }
      nav { display: flex; gap: 24px; margin-right: auto; padding-top: 2px; }
      nav a { color: #262626; text-decoration: none; font-size: 16px; }
      nav a:first-child { margin-right: 8px; }
      button { height: 30px; border: 1px solid #dcdcdc; border-radius: 5px; background: none; display: flex; align-items: center; gap: 5px; padding: 0 8px 0 9px; font: 600 16px "Open Sans", sans-serif; color: #bbb; }
      office-icon { width: 16px; height: 16px; }
      .chat { width: 40px; background: #fff; border-color: #ccc; }
    `, `<nav>${tabs.map(t => `<a href="#">${t}</a>`).join('')}</nav>
      <button disabled><office-icon name="teams"></office-icon>Present in Teams</button>
      <button class="chat" aria-label="Comments"><office-icon name="comment"></office-icon></button>
      <button disabled><office-icon name="share"></office-icon>Share</button>`);
  }
}
customElements.define('ribbon-tabs', RibbonTabs);

class ProtectedBar extends HTMLElement {
  connectedCallback() {
    render(this, `
      :host { display: flex; align-items: center; height: 36px; margin: 0 10px 0 9px; padding: 0 13px; border-radius: 9px; background: #fcf6b6; box-shadow: 0 2px 4px #0003; position: relative; z-index: 1; color: #3a3a3a; white-space: nowrap; }
      .shield { width: 26px; height: 28px; margin-right: 12px; }
      b { font-weight: 600; margin-right: 10px; }
      a { color: inherit; text-underline-offset: 3px; }
      .go { margin-left: 39px; height: 26px; width: 138px; border: 1px solid #999; border-radius: 4px; background: #fdfdfd; color: #333; font: 14px "Open Sans", sans-serif; padding: 0; }
      .x { margin-left: auto; border: 0; background: none; padding: 0; display: flex; }
      .x office-icon { width: 12px; height: 12px; }
    `, `<office-icon class="shield" name="shield"></office-icon><b>PROTECTED VIEW</b>
      <a href="#">Be careful—files from the Internet can contain viruses. Unless you need to edit, it's safer to stay in Protected View.</a>
      <button class="go">Enable Editing</button>
      <button class="x" aria-label="Close"><office-icon name="xbold"></office-icon></button>`);
  }
}
customElements.define('protected-bar', ProtectedBar);

class StatusBar extends HTMLElement {
  connectedCallback() {
    render(this, `
      :host { display: flex; align-items: center; height: 28px; background: #f4f4f4; border-top: 1px solid #fff; padding: 0 6px 0 9px; font-size: 12px; color: #333; position: relative; }
      .text { margin-right: auto; font-size: 13px; }
      button { border: 0; background: none; padding: 0; height: 27px; display: grid; place-items: center; }
      .view { width: 50px; } .on { background: #e0e0e0; }
      .view office-icon { height: 18px; }
      .step office-icon { width: 12px; height: 12px; }
      .step { margin-left: 5px; }
      input { appearance: none; width: 125px; height: 20px; margin: 0 0 0 6px; background: linear-gradient(#666,#666) 0 50%/100% 1px no-repeat, linear-gradient(#666,#666) 50% 50%/1px 7px no-repeat; }
      input::-webkit-slider-thumb { appearance: none; width: 6px; height: 14px; background: #555; }
      output { width: 25px; margin: 0 14px 0 15px; white-space: nowrap; }
    `, `<span class="text">Opening: 23</span>
      <button class="view on" aria-label="Normal"><office-icon name="normal"></office-icon></button>
      <button class="view" aria-label="Slide Sorter"><office-icon name="sorter"></office-icon></button>
      <button class="view" aria-label="Reading View"><office-icon name="reading"></office-icon></button>
      <button class="view" aria-label="Slide Show"><office-icon name="show"></office-icon></button>
      <button class="step" aria-label="Zoom out"><office-icon name="minus"></office-icon></button>
      <input type="range" aria-label="Zoom" min="0" max="100" value="41">
      <button class="step" aria-label="Zoom in"><office-icon name="plus"></office-icon></button>
      <output>83%</output>
      <button aria-label="Fit slide"><office-icon name="fit"></office-icon></button>`);
  }
}
customElements.define('status-bar', StatusBar);

class TaskBar extends HTMLElement {
  connectedCallback() {
    const apps = ['start', 'find', 'tasks', 'widgets', 'chat', 'edge', 'folder', 'mail', 'dropbox', 'ppt', 'word'];
    const open = { edge: 'open', folder: 'open', word: 'open', ppt: 'active' };
    render(this, `
      :host { display: grid; grid-template-columns: 1fr auto 1fr; align-items: center; height: 60px; color: #fff;
        background: linear-gradient(90deg, #132b34 0, #152c35 12%, #242a2c 15%, #262b2c 31%, #182c36 38%, #152842 45%, #1b2738 52%, #20242f 62%, #211e2b 80%, #271e29 90%, #262324 100%); }
      .apps { display: flex; gap: 5px; grid-column: 2; }
      .apps button { width: 50px; height: 50px; border: 0; border-radius: 5px; background: none; padding: 10px 0 0; display: flex; flex-direction: column; align-items: center; justify-content: space-between; }
      .apps office-icon { width: 30px; height: 30px; }
      .apps button::after { content: ""; width: 8px; height: 4px; border-radius: 2px; margin-bottom: 1px; }
      .apps .open::after { background: #9a9ca0; }
      .apps .active { background: #323846; }
      .apps .active::after { width: 20px; background: #4cc2ff; }
      .tray { display: flex; align-items: center; justify-content: flex-end; padding-right: 24px; }
      .tray office-icon { margin-right: 20px; }
      .tray .near { margin-right: 10px; }
      time { text-align: right; font-size: 15px; line-height: 20px; margin: 0 10px 0 20px; }
      .badge { width: 20px; height: 20px; border-radius: 50%; background: #4cc2ff; color: #10222e; font-size: 12px; line-height: 20px; text-align: center; }
      .tray .last { margin-right: 0; }
    `, `<div class="apps">${apps.map(a => `<button class="${open[a] || ''}" aria-label="${a}"><office-icon name="${a}"></office-icon></button>`).join('')}</div>
      <div class="tray"><office-icon name="chevron"></office-icon><office-icon name="cloud"></office-icon><office-icon name="mic"></office-icon>
      <office-icon class="near" name="wifi"></office-icon><office-icon class="near" name="volume"></office-icon><office-icon class="last" name="battery"></office-icon>
      <time>9:20 AM<br>2/9/2022</time><span class="badge">2</span></div>`);
  }
}
customElements.define('task-bar', TaskBar);

class PptWindow extends HTMLElement {
  connectedCallback() {
    render(this, `
      :host { display: flex; flex-direction: column; height: 100vh; }
      main { flex: 1; min-height: 0; display: flex; }
      .list { width: 426px; flex: none; display: flex; flex-direction: column; gap: 25px; overflow: hidden; }
      .rail { margin-top: 2px; height: calc(100% - 3px); }
      .edit { flex: 1; min-width: 0; margin-left: 4px; border-left: 1px solid #d0d0d0; display: flex; flex-direction: column; }
      .stage { display: flex; flex: 1; min-height: 0; }
      .canvas { flex: 1; padding: 14px 63px 0 65px; }
      .canvas map-slide { border: 1px solid #c6c6c6; }
      .side { display: flex; flex-direction: column; align-items: center; padding: 2px 1px 28px 0; gap: 9px; }
      .side scroll-rail { flex: 1; margin-bottom: -3px; }
      .side office-icon { width: 10px; height: 12px; }
      .side button { padding: 0; border: 0; background: none; display: flex; }
      .notes { height: 83px; border-top: 1px solid #d3d3d3; margin-left: 1px; }
      .blue { width: 65px; height: 40px; background: #0053a3; }
    `, `
      <title-bar></title-bar><ribbon-tabs></ribbon-tabs><protected-bar></protected-bar>
      <main>
        <div class="list">
          <slide-thumb first><novavax-slide></novavax-slide></slide-thumb>
          <slide-thumb no="8"><path-slide></path-slide></slide-thumb>
          <slide-thumb no="9" current><map-slide></map-slide></slide-thumb>
          <slide-thumb no="10"><pfizer-slide></pfizer-slide></slide-thumb>
          <slide-thumb no="11"><div class="blue"></div></slide-thumb>
        </div>
        <scroll-rail class="rail" parts="224 134 460"></scroll-rail>
        <div class="edit">
          <div class="stage">
            <div class="canvas"><map-slide></map-slide></div>
            <div class="side"><scroll-rail parts="232 28 407"></scroll-rail>
              <button aria-label="Previous slide"><office-icon name="prev"></office-icon></button>
              <button aria-label="Next slide"><office-icon name="next"></office-icon></button></div>
          </div>
          <div class="notes"></div>
        </div>
      </main>
      <status-bar></status-bar><task-bar></task-bar>`);
  }
}
customElements.define('ppt-window', PptWindow);
</script>
</body>
</html>
